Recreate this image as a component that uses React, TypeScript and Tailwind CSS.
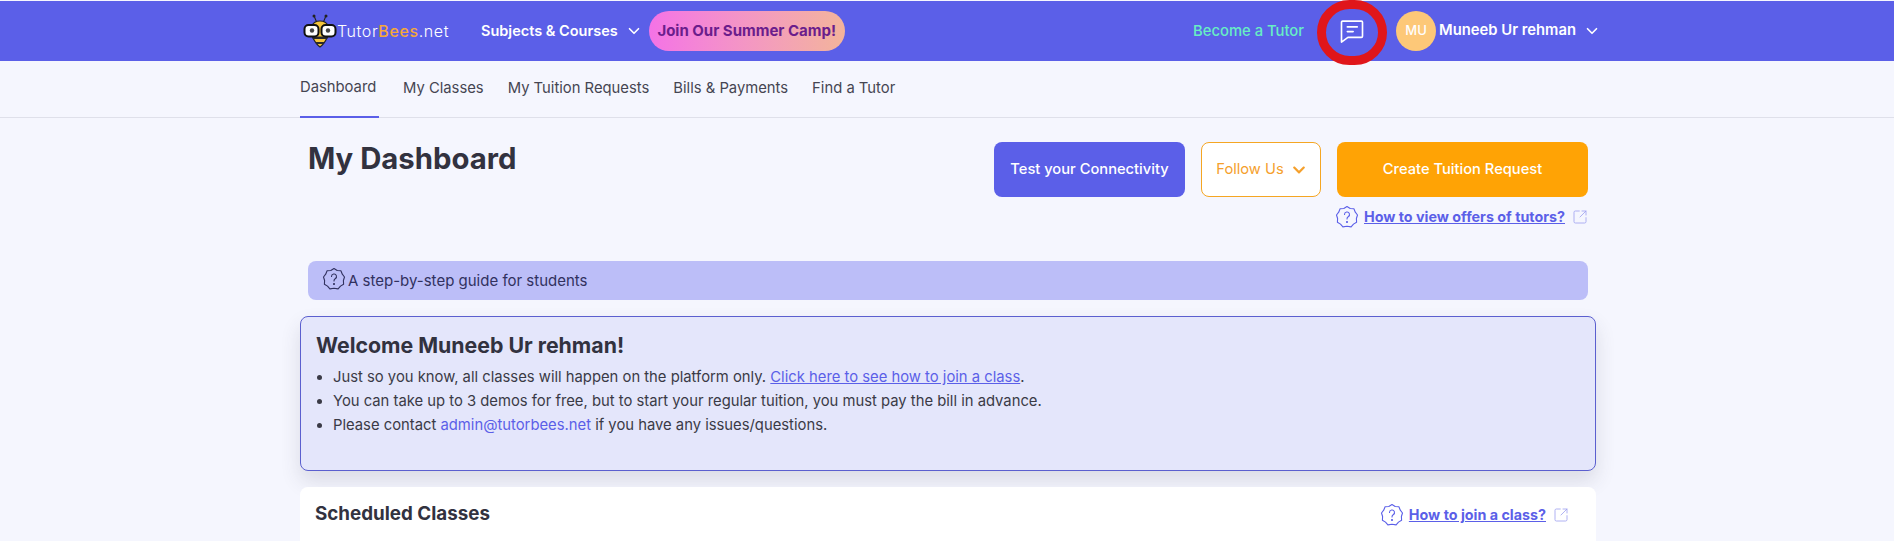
import { ChevronDown, SquareArrowOutUpRight } from 'lucide-react';
import { FaChevronDown } from 'react-icons/fa';

const font = { fontFamily: 'Inter, "Open Sans", sans-serif' };

function BeeLogo() {
  return (
    <svg width="34" height="36" viewBox="0 0 34 36" fill="none">
      <circle cx="11" cy="3" r="1.500" fill="#222" />
      <circle cx="23" cy="3" r="1.500" fill="#222" />
      <path d="M11.500 4l2.500 6M22.500 4L20 10" stroke="#222" strokeWidth="1.100" />
      <path d="M9 13c1-3 4-5 8-5s7 2 8 5l-1 12c-2 4-4 7-7 9-3-2-5-5-7-9z" fill="#f5c53c" stroke="#222" strokeWidth="1.200" />
      <path d="M8.500 23.500h17l-1.500 2.500H10zM12 29h10l-1.500 2h-7z" fill="#2a2a2a" />
      <rect x="1.500" y="12" width="14" height="11.500" rx="4" fill="#fff" stroke="#111" strokeWidth="2" />
      <rect x="18.500" y="12" width="14" height="11.500" rx="4" fill="#fff" stroke="#111" strokeWidth="2" />
      <circle cx="9" cy="17.500" r="2.200" fill="#444" />
      <circle cx="25" cy="17.500" r="2.200" fill="#444" />
    </svg>
  );
}

function HelpBadge({ className }: { className: string }) {
  return (
    <svg className={className} viewBox="0 0 24 24" fill="none" stroke="currentColor" strokeWidth="1.100">
      <path d="M12 1.500l3.200 2 3.700.3 1.400 3.400 2.200 2.800-1.100 3.500.2 3.700-3.100 1.900-2.400 2.800-4.100-.6-4.100.6-2.400-2.800-3.100-1.900.2-3.700-1.100-3.500 2.200-2.800 1.400-3.400 3.700-.3z" strokeLinejoin="round" />
      <path d="M9.500 9.500a2.500 2.500 0 1 1 3.700 2.200c-.8.5-1.200 1-1.200 2.200" strokeLinecap="round" />
      <circle cx="12" cy="17" r=".5" fill="currentColor" />
    </svg>
  );
}

function HelpLink({ label }: { label: string }) {
  return (
    <div className="flex items-center text-[#5b5fe8]">
      <HelpBadge className="w-6 h-6 mr-[5px]" />
      <a className="text-[14.300px] font-bold underline">{label}</a>
      <SquareArrowOutUpRight className="w-4 h-4 ml-[7px] text-[#9d9ff0]" strokeWidth={1.200} />
    </div>
  );
}

export default function App() {
  const tabs = ['Dashboard', 'My Classes', 'My Tuition Requests', 'Bills & Payments', 'Find a Tutor'];

  return (
    <div className="relative h-[541px] overflow-hidden bg-[#f5f6fe] text-[#32323f]" style={font}>
      {/* Header */}
      <header className="mt-px h-[60px] bg-[#5b5fe8] text-white">
        <div className="w-[1296px] ml-[300px] flex items-center h-full">
          <div className="flex items-center ml-[3px] w-[178px]">
            <BeeLogo />
            <span className="text-[16px] font-light tracking-[0.6px]">
              Tutor<span className="text-[#f5a83a] font-medium">Bees</span>.net
            </span>
          </div>
          <span className="text-[14.500px] font-semibold">Subjects &amp; Courses</span>
          <ChevronDown className="w-[18px] h-[18px] ml-[7px] mr-[6px]" strokeWidth={2.200} />
          <span className="h-10 w-[196px] rounded-[20px] bg-gradient-to-r from-[#f472e6] to-[#f3b49a] flex items-center justify-center text-[15px] font-bold text-[#6b1d8c]">
            Join Our Summer Camp!
          </span>
          <span className="ml-auto text-[14.800px] font-medium text-[#67eec4]">Become a Tutor</span>
          <svg className="w-7 h-7 ml-[34px] mr-[30px]" viewBox="0 0 24 24" fill="none" stroke="currentColor" strokeWidth="1.400">
            <path d="M4 3.500h16a1 1 0 0 1 1 1v12a1 1 0 0 1-1 1H8.500L3 21.500v-17a1 1 0 0 1 1-1z" strokeLinejoin="round" />
            <path d="M8 8.500h8.500M8 12.500h5" strokeLinecap="round" />
          </svg>
          <span className="w-10 h-10 rounded-full bg-[#fdc878] flex items-center justify-center text-[13px] font-medium">MU</span>
          <span className="ml-[3px] text-[14.800px] font-semibold -mt-px">Muneeb Ur rehman</span>
          <ChevronDown className="w-[18px] h-[18px] ml-[7px] -mr-[5px]" strokeWidth={2.200} />
        </div>
      </header>

      {/* Tabs */}
      <nav className="h-[57px] border-b border-[#dfe0ea]">
        <div className="ml-[300px] flex gap-[24px] h-full">
          {tabs.map((tab, i) => (
            <a
              key={tab}
              className={`h-[57px] pb-[3px] flex items-center text-[14.800px] text-[#454552] ${i === 0 ? 'border-b-2 border-[#5b5fe8] w-[79px]' : ''}`}
            >
              {tab}
            </a>
          ))}
        </div>
      </nav>

      <main className="w-[1296px] ml-[300px]">
        <div className="px-2 pt-6 flex justify-between">
          <h1 className="text-[29.300px] leading-[34px] font-bold text-[#32323f]">My Dashboard</h1>
          <div>
            <div className="flex gap-4 h-[55px] text-[14.700px]">
              <button className="w-[191px] rounded-lg bg-[#5b5fe8] text-white font-medium">Test your Connectivity</button>
              <button className="w-[120px] rounded-lg border border-[#f5a623] bg-white text-[#f5a02c] flex items-center justify-center gap-2">
                Follow Us
                <FaChevronDown className="w-[14px] h-[14px]" />
              </button>
              <button className="w-[251px] rounded-lg bg-[#ffa305] text-white font-medium">Create Tuition Request</button>
            </div>
            <div className="flex justify-end mt-[8px]">
              <HelpLink label="How to view offers of tutors?" />
            </div>
          </div>
        </div>

        {/* Guide bar */}
        <div className="mx-2 mt-[32px] h-[39px] rounded-lg bg-[#bcbef8] flex items-center pl-[14px] pt-px text-[15px] text-[#31315f]">
          <HelpBadge className="w-6 h-6 mr-[2px] -mt-1" />
          A step-by-step guide for students
        </div>

        {/* Welcome card */}
        <section className="mt-4 h-[155px] rounded-lg border border-[#5b5fcf] bg-[#e4e6fb] px-[15px] pt-[13px] shadow-[0_10px_20px_rgba(60,60,80,0.14)]">
          <h2 className="text-[21.300px] leading-[30px] font-bold text-[#32323f]">Welcome Muneeb Ur rehman!</h2>
          <ul className="list-disc ml-[17px] mt-[5px] text-[14.800px] leading-[24px] text-[#3a3a46]">
            <li>
              Just so you know, all classes will happen on the platform only.{' '}
              <a className="text-[#5b5fe8] underline">Click here to see how to join a class</a>.
            </li>
            <li>You can take up to 3 demos for free, but to start your regular tuition, you must pay the bill in advance.</li>
            <li>
              Please contact <a className="text-[#5b5fe8]">admin@tutorbees.net</a> if you have any issues/questions.
            </li>
          </ul>
        </section>

        {/* Scheduled classes */}
        <section className="mt-4 h-[80px] rounded-t-lg bg-white pl-[15px] pr-4 pt-[13px] flex justify-between items-start">
          <h2 className="text-[18.800px] leading-[28px] font-bold text-[#32323f]">Scheduled Classes</h2>
          <div className="pt-[3px] pr-[11px]">
            <HelpLink label="How to join a class?" />
          </div>
        </section>
      </main>

      {/* Red annotation ring around the chat icon */}
      <div className="absolute left-[1317px] top-0 w-[70px] h-[65px] rounded-full border-[9px] border-[#e0161b]" />
    </div>
  );
}
